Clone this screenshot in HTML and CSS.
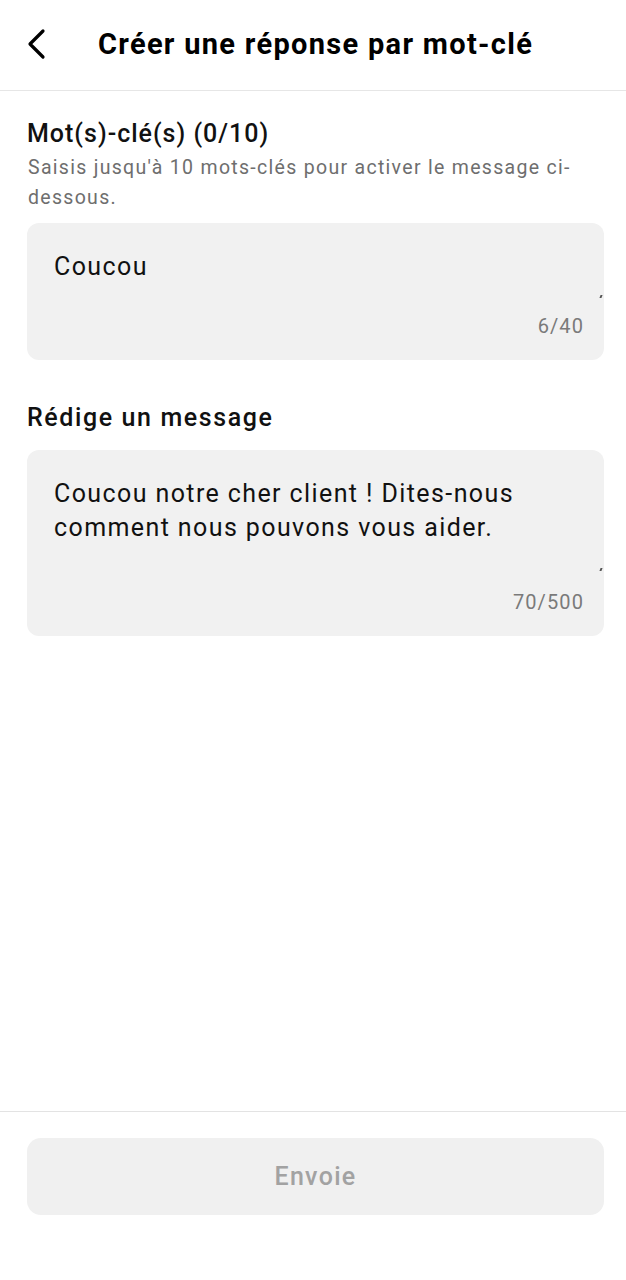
FILE: index.html
```html
<!DOCTYPE html>
<html lang="fr">
<head>
    <meta charset="UTF-8">
    <meta name="viewport" content="width=device-width, initial-scale=1.0">
    <title>Créer une réponse par mot-clé</title>
    <link rel="stylesheet" href="styles.css">
</head>
<body>
    <div class="page">
        <header class="top-bar">
            <button class="back-btn" aria-label="Retour">
                <svg width="22" height="32" viewBox="0 0 22 32">
                    <path d="M18 3 L5 16 L18 29" fill="none" stroke="#000" stroke-width="3.2" stroke-linecap="round" stroke-linejoin="round"/>
                </svg>
            </button>
            <h1 class="title">Créer une réponse par mot-clé</h1>
        </header>

        <main class="content">
            <section class="field">
                <h2 class="field-label">Mot(s)-clé(s) (0/10)</h2>
                <p class="field-hint">Saisis jusqu'à 10 mots-clés pour activer le message ci-dessous.</p>
                <div class="input-box keyword-box">
                    <div class="input-text">Coucou</div>
                    <span class="grip"></span>
                    <div class="counter">6/40</div>
                </div>
            </section>

            <section class="field">
                <h2 class="field-label">Rédige un message</h2>
                <div class="input-box message-box">
                    <div class="input-text">Coucou notre cher client ! Dites-nous comment nous pouvons vous aider.</div>
                    <span class="grip"></span>
                    <div class="counter">70/500</div>
                </div>
            </section>
        </main>

        <footer class="bottom-bar">
            <button class="send-btn" disabled>Envoie</button>
        </footer>
    </div>
</body>
</html>
```

FILE: styles.css
```css
* {
    box-sizing: border-box;
}
body {
    margin: 0;
    font-family: Roboto, "Liberation Sans", sans-serif;
    color: #111;
    background: #fff;
}
.page {
    display: flex;
    flex-direction: column;
    min-height: 1280px;
}
.top-bar {
    height: 91px;
    display: flex;
    align-items: center;
    border-bottom: 1px solid #e6e6e6;
    padding: 0 0 2px 25px;
}
.back-btn {
    background: none;
    border: none;
    padding: 0;
    width: 22px;
    height: 32px;
    display: flex;
    cursor: pointer;
}
.title {
    margin: 0 0 0 51px;
    font-size: 29px;
    font-weight: 700;
    color: #000;
    letter-spacing: 1.3px;
}
.content {
    flex: 1;
    padding: 0 22px 0 27px;
}
.field-label {
    margin: 0;
    font-size: 25px;
    font-weight: 500;
    line-height: 32px;
    letter-spacing: 1px;
    color: #111;
}
.field:first-child .field-label {
    margin-top: 27px;
}
.field-hint {
    margin: 3px 0 10px 1px;
    font-size: 19.5px;
    line-height: 30px;
    letter-spacing: 1.3px;
    color: #6e6e6e;
}
.field + .field {
    margin-top: 42px;
}
.field + .field .field-label {
    margin-bottom: 16px;
    letter-spacing: 1.6px;
}
.input-box {
    position: relative;
    background: #f1f1f1;
    border-radius: 12px;
    padding: 27px 27px 0;
}
.keyword-box {
    height: 137px;
}
.message-box {
    height: 186px;
}
.input-text {
    font-size: 25px;
    line-height: 34px;
    letter-spacing: 1.4px;
    color: #111;
}
.counter {
    position: absolute;
    right: 20px;
    bottom: 22px;
    font-size: 20px;
    letter-spacing: 1.1px;
    color: #7a7a7a;
}
.grip {
    position: absolute;
    right: 2px;
    width: 2px;
    height: 3px;
    background: #555;
    transform: skewX(-20deg);
}
.keyword-box .grip {
    top: 72px;
}
.message-box .grip {
    top: 118px;
}
.bottom-bar {
    border-top: 1px solid #e3e3e3;
    padding: 26px 22px 65px 27px;
}
.send-btn {
    width: 100%;
    height: 77px;
    border: none;
    border-radius: 14px;
    background: #f0f0f0;
    color: #a2a2a2;
    font-family: Roboto, "Liberation Sans", sans-serif;
    font-size: 25px;
    font-weight: 500;
    letter-spacing: 1.3px;
}
```
